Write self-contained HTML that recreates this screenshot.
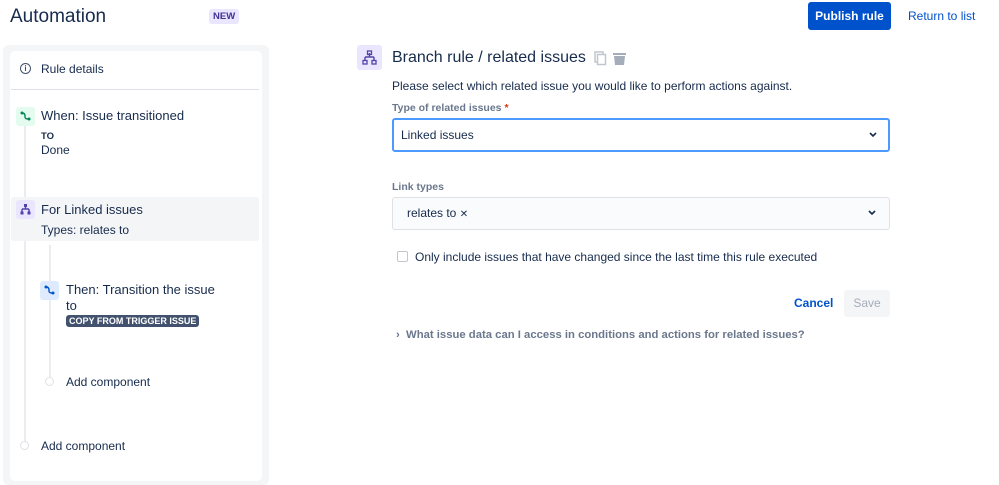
<!DOCTYPE html>
<html><head><style>
*{box-sizing:border-box;margin:0;padding:0}
body{width:999px;height:473px;overflow:hidden;background:#fff;font-family:"Liberation Sans",sans-serif;color:#172b4d;position:relative}
.a{position:absolute}
.t{font-size:12px}
</style></head><body>
<div class="a" style="left:10px;top:6px;font-size:19px;color:#172b4d">Automation</div>
<div class="a" style="left:209px;top:9px;background:#eae6ff;color:#403294;font-size:9.5px;font-weight:bold;padding:2px 4px;border-radius:3px">NEW</div>
<div class="a" style="left:808px;top:2px;width:83px;height:28px;background:#0052cc;color:#fff;border-radius:3px;font-size:12px;font-weight:bold;text-align:center;line-height:28px">Publish rule</div>
<div class="a" style="left:908px;top:9px;color:#0052cc;font-size:12px">Return to list</div>

<div class="a" style="left:3px;top:45px;width:266px;height:440px;background:#f4f5f7;border-radius:6px"></div>
<div class="a" style="left:10px;top:51px;width:252px;height:430px;background:#fff;border-radius:5px"></div>
<div class="a" style="left:20px;top:63px;width:11px;height:11px;border:1.3px solid #42526e;border-radius:50%;font-size:8px;text-align:center;line-height:9px;color:#42526e;font-weight:bold">i</div>
<div class="a t" style="left:41px;top:62px">Rule details</div>
<div class="a" style="left:11px;top:89px;width:248px;height:1px;background:#dfe1e6"></div>

<div class="a" style="left:24px;top:120px;width:2px;height:330px;background:#ebecf0"></div>
<div class="a" style="left:49px;top:245px;width:2px;height:135px;background:#ebecf0"></div>

<div class="a" style="left:16px;top:107px;width:19px;height:19px;background:#e3fcef;border-radius:3px"></div>
<svg class="a" style="left:16px;top:107px" width="19" height="19"><path d="M6 6 Q9 6 9 9 L9 10 Q9 12 12 12" stroke="#00875a" stroke-width="1.4" fill="none"/><circle cx="6" cy="6" r="1.5" fill="#00875a"/><circle cx="13" cy="12" r="1.5" fill="#00875a"/></svg>
<div class="a" style="left:41px;top:108px;font-size:13px">When: Issue transitioned</div>
<div class="a" style="left:41px;top:131px;font-size:9.5px;font-weight:bold">TO</div>
<div class="a t" style="left:41px;top:143px">Done</div>

<div class="a" style="left:11px;top:197px;width:248px;height:44px;background:#f4f5f7;border-radius:3px"></div>
<div class="a" style="left:16px;top:200px;width:19px;height:19px;background:#eae6ff;border-radius:3px"></div>
<svg class="a" style="left:16px;top:200px" width="19" height="19"><path d="M9.5 5v4M6 9h7M6 9v3M13 9v3" stroke="#5243aa" stroke-width="1.4" fill="none"/><rect x="8" y="4" width="3" height="3" fill="#5243aa"/><rect x="4.5" y="11.5" width="3" height="3" fill="#5243aa"/><rect x="11.5" y="11.5" width="3" height="3" fill="#5243aa"/></svg>
<div class="a" style="left:41px;top:202px;font-size:13px">For Linked issues</div>
<div class="a t" style="left:41px;top:223px">Types: relates to</div>

<div class="a" style="left:40px;top:281px;width:19px;height:19px;background:#deebff;border-radius:3px"></div>
<svg class="a" style="left:40px;top:281px" width="19" height="19"><path d="M6 6 Q9 6 9 9 L9 10 Q9 12 12 12" stroke="#0052cc" stroke-width="1.4" fill="none"/><circle cx="6" cy="6" r="1.5" fill="#0052cc"/><circle cx="13" cy="12" r="1.5" fill="#0052cc"/></svg>
<div class="a" style="left:66px;top:282px;font-size:13px;line-height:16px">Then: Transition the issue<br>to</div>
<div class="a" style="left:66px;top:315px;background:#42526e;color:#fff;font-size:9px;font-weight:bold;padding:1px 3px;border-radius:3px">COPY FROM TRIGGER ISSUE</div>
<div class="a" style="left:45px;top:377px;width:9px;height:9px;border:1.5px solid #dfe1e6;border-radius:50%;background:#fff"></div>
<div class="a t" style="left:66px;top:375px">Add component</div>
<div class="a" style="left:20px;top:441px;width:9px;height:9px;border:1.5px solid #dfe1e6;border-radius:50%;background:#fff"></div>
<div class="a t" style="left:41px;top:439px">Add component</div>

<div class="a" style="left:357px;top:45px;width:25px;height:25px;background:#eae6ff;border-radius:3px"></div>
<svg class="a" style="left:357px;top:45px" width="25" height="25"><path d="M12.5 8v4M8 12h9M8 12v4M17 12v4" stroke="#5243aa" stroke-width="1.4" fill="none"/><rect x="10.5" y="6" width="4" height="3.5" fill="none" stroke="#5243aa" stroke-width="1.3"/><rect x="6" y="15.5" width="4" height="3.5" fill="none" stroke="#5243aa" stroke-width="1.3"/><rect x="15" y="15.5" width="4" height="3.5" fill="none" stroke="#5243aa" stroke-width="1.3"/></svg>
<div class="a" style="left:392px;top:49px;font-size:16px">Branch rule / related issues</div>
<svg class="a" style="left:594px;top:51px" width="36" height="15"><rect x="1" y="1" width="8" height="10" fill="none" stroke="#c1c7d0" stroke-width="1.5"/><rect x="3.5" y="3.5" width="8" height="10" fill="#fff" stroke="#c1c7d0" stroke-width="1.5"/><rect x="19" y="2" width="13" height="2" fill="#a5adba"/><path d="M20 5h11l-1 9h-9z" fill="#a5adba"/></svg>
<div class="a t" style="left:392px;top:79px">Please select which related issue you would like to perform actions against.</div>
<div class="a" style="left:392px;top:102px;font-size:10.5px;font-weight:bold;color:#6b778c">Type of related issues <span style="color:#de350b">*</span></div>
<div class="a" style="left:392px;top:118px;width:498px;height:34px;border:2px solid #4c9aff;border-radius:3px;background:#fff"></div>
<div class="a t" style="left:401px;top:128px">Linked issues</div>
<svg class="a" style="left:868px;top:130px" width="10" height="10"><path d="M2 3l3 3 3-3" stroke="#172b4d" stroke-width="1.6" fill="none"/></svg>
<div class="a" style="left:392px;top:181px;font-size:10.5px;font-weight:bold;color:#6b778c">Link types</div>
<div class="a" style="left:392px;top:197px;width:498px;height:33px;border:1.5px solid #dfe1e6;border-radius:3px;background:#fafbfc"></div>
<div class="a t" style="left:407px;top:206px">relates to <span style="font-size:10px">✕</span></div>
<svg class="a" style="left:867px;top:208px" width="10" height="10"><path d="M2 3l3 3 3-3" stroke="#172b4d" stroke-width="1.6" fill="none"/></svg>
<div class="a" style="left:397px;top:251px;width:11px;height:11px;border:1.5px solid #c1c7d0;border-radius:2px"></div>
<div class="a t" style="left:415px;top:250px">Only include issues that have changed since the last time this rule executed</div>
<div class="a t" style="left:794px;top:296px;color:#0052cc;font-weight:bold">Cancel</div>
<div class="a" style="left:844px;top:290px;width:46px;height:27px;background:#f4f5f7;border-radius:3px;color:#a5adba;font-size:12px;text-align:center;line-height:27px">Save</div>
<div class="a" style="left:396px;top:329px;font-size:11.3px;color:#6b778c;font-weight:bold">›&nbsp;&nbsp;What issue data can I access in conditions and actions for related issues?</div>
</body></html>
